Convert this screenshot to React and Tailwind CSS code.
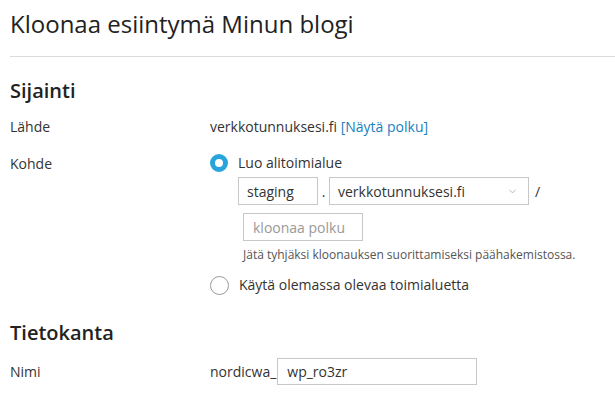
import React from 'react';
import { ChevronDown } from 'lucide-react';

const Row = ({ label, children, className = '' }) => (
  <div className={`flex ${className}`}>
    <div className="w-[200px] shrink-0">{label}</div>
    <div className="flex-1">{children}</div>
  </div>
);

const Radio = ({ checked, label }) => (
  <div className="flex items-center h-[18px]">
    {checked ? (
      <span className="w-[18px] h-[18px] rounded-full border-[5px] border-[#28a4dd] bg-white box-border" />
    ) : (
      <span className="w-[19px] h-[19px] rounded-full border border-[#9a9a9a] bg-white box-border" />
    )}
    <span className="ml-[10px] leading-5">{label}</span>
  </div>
);

export default function App() {
  return (
    <div className="pl-[10px] text-[14px] text-[#333] bg-white min-h-[396px]" style={{ fontFamily: '"Open Sans", "Liberation Sans", sans-serif' }}>
      <div className="pt-2 pb-4 border-b border-[#dcdcdc]">
        <h1 className="text-[24px] leading-8 text-[#222]">Kloonaa esiintymä Minun blogi</h1>
      </div>

      <h2 className="mt-5 text-[20px] leading-7 font-semibold text-[#222]">Sijainti</h2>

      <Row label="Lähde" className="mt-3 leading-5">
        verkkotunnuksesi.fi{' '}
        <span className="text-[#1a80c0]">[Näytä polku]</span>
      </Row>

      <Row label={<span className="leading-5 block">Kohde</span>} className="mt-[17px]">
        <Radio checked label="Luo alitoimialue" />
        <div className="ml-7 mt-[5px] flex items-center">
          <div className="w-[80px] h-[28px] border border-[#c8c8c8] pl-2 flex items-center">staging</div>
          <span className="w-[11px] text-center">.</span>
          <div className="w-[200px] h-[28px] border border-[#c8c8c8] pl-2 pr-[10px] flex items-center justify-between">
            <span>verkkotunnuksesi.fi</span>
            <ChevronDown className="w-[11px] h-[11px] text-[#999]" strokeWidth={1.5} />
          </div>
          <span className="ml-[6px]">/</span>
        </div>
        <div className="ml-[33px] mt-2 w-[120px] h-[28px] border border-[#c8c8c8] pl-[9px] flex items-center text-[#999]">
          kloonaa polku
        </div>
        <div className="ml-[33px] mt-[6px] text-[12px] leading-4 text-[#555]">
          Jätä tyhjäksi kloonauksen suorittamiseksi päähakemistossa.
        </div>
        <div className="mt-[13px]">
          <Radio label="Käytä olemassa olevaa toimialuetta" />
        </div>
      </Row>

      <h2 className="mt-[25px] text-[20px] leading-7 font-semibold text-[#222]">Tietokanta</h2>

      <Row label={<span className="leading-[27px] block">Nimi</span>} className="mt-[11px]">
        <div className="flex items-center h-[27px]">
          <span>nordicwa_</span>
          <div className="ml-px w-[200px] h-[27px] border border-[#c8c8c8] pl-[9px] flex items-center">wp_ro3zr</div>
        </div>
      </Row>
    </div>
  );
}
